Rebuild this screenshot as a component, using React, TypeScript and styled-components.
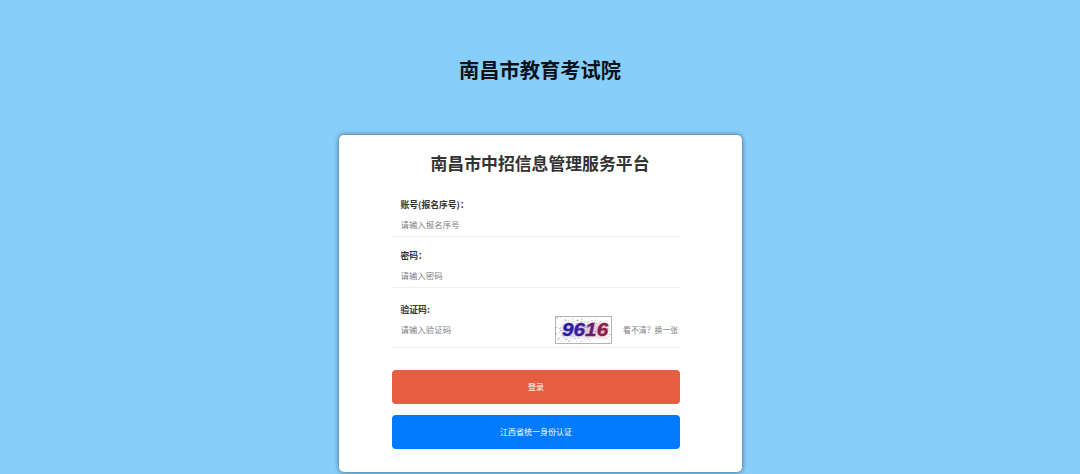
import React from 'react';
import styled, { createGlobalStyle } from 'styled-components';

const GlobalStyle = createGlobalStyle`
  * {
    box-sizing: border-box;
  }
  body {
    margin: 0;
    background: #87cefa;
    font-family: 'Noto Sans CJK SC', sans-serif;
    overflow: hidden;
  }
`;

const Page = styled.div`
  display: flex;
  flex-direction: column;
  align-items: center;
  height: 474px;
  padding-top: 55px;
`;

const PageTitle = styled.h1`
  margin: 0 0 50px;
  font-size: 20.25px;
  font-weight: 700;
  line-height: 30px;
  color: #0b1219;
`;

const Card = styled.div`
  flex: none;
  width: 403px;
  height: 337px;
  padding: 15px 61.5px 0 53.5px;
  background: #fff;
  border-radius: 5px;
  box-shadow: 0 0 5px rgba(0, 0, 0, 0.55);
`;

const CardTitle = styled.h2`
  margin: 0 0 23px;
  font-size: 16.85px;
  font-weight: 700;
  line-height: 26px;
  text-align: center;
  white-space: nowrap;
  color: #333;
  padding-left: 8px;
`;

interface FieldProps {
  height: number;
  gap: number;
}

const Field = styled.div<FieldProps>`
  display: flex;
  flex-direction: column;
  height: ${(p) => p.height}px;
  margin-bottom: ${(p) => p.gap}px;
  padding-left: 8.5px;
  border-bottom: 1px solid #f0f0f0;
`;

const Label = styled.label`
  flex: none;
  font-size: 8.8px;
  font-weight: 700;
  line-height: 12px;
  margin-bottom: 3px;
  color: #333;
`;

const InputRow = styled.div`
  display: flex;
  align-items: center;
  height: 22px;
`;

const Input = styled.input`
  flex: 1;
  min-width: 0;
  height: 20px;
  padding: 0 0 2px;
  border: 0;
  outline: 0;
  background: transparent;
  font: 400 8.45px/12px 'Noto Sans CJK SC', sans-serif;
  color: #333;
  &::placeholder {
    color: #808080;
    opacity: 1;
  }
`;

const CaptchaImage = styled.svg`
  flex: none;
  width: 57px;
  height: 28px;
  margin-right: 11px;
`;

const Refresh = styled.span`
  width: 57px;
  font-size: 7.9px;
  line-height: 12px;
  white-space: nowrap;
  color: #808080;
`;

const Button = styled.button<{ bgColor: string }>`
  display: block;
  width: 288px;
  height: 34px;
  margin: 0 0 11px;
  padding: 0;
  border: 0;
  border-radius: 4px;
  background: ${(p) => p.bgColor};
  color: #fff;
  font: 400 8px/12px 'Noto Sans CJK SC', sans-serif;
`;

const noiseColors = ['#777', '#a99', '#88a', '#999', '#b8a', '#9a9'];

// scattered specks behind the captcha digits
const specks = Array.from({ length: 130 }, (_, i) => ({
  x: 1 + ((i * 37 + (i * i) % 11) % 54),
  y: 1 + ((i * 17 + (i * i) % 7) % 25),
  w: i % 3 === 0 ? 1.6 : 0.8,
  fill: noiseColors[i % noiseColors.length],
}));

const Captcha = () => (
  <CaptchaImage viewBox="0 0 57 28">
    <defs>
      <linearGradient id="digits" gradientUnits="userSpaceOnUse" x1="7" y1="0" x2="46" y2="0">
        <stop offset="0" stopColor="#2419a8" />
        <stop offset="0.4" stopColor="#3a1b98" />
        <stop offset="0.7" stopColor="#7a1c60" />
        <stop offset="1" stopColor="#981c38" />
      </linearGradient>
      <filter id="glow" x="-20%" y="-20%" width="140%" height="140%">
        <feGaussianBlur stdDeviation="2" />
      </filter>
    </defs>
    <rect x="0.5" y="0.5" width="56" height="27" fill="#fff" stroke="#b4b4b4" />
    <rect x="7" y="8" width="45" height="13" fill="url(#digits)" opacity="0.22" filter="url(#glow)" />
    {specks.map((s, i) => (
      <rect key={i} x={s.x} y={s.y} width={s.w} height="0.8" fill={s.fill} opacity="0.6" />
    ))}
    <text
      x="6"
      y="20.5"
      transform="scale(1.15 1)"
      fontFamily="'Liberation Sans', sans-serif"
      fontSize="18"
      fontWeight="700"
      fontStyle="italic"
      letterSpacing="0.1"
      fill="url(#digits)"
      stroke="url(#digits)"
      strokeWidth="0.3"
    >
      9616
    </text>
  </CaptchaImage>
);

const App = () => {
  return (
    <>
      <GlobalStyle />
      <Page>
        <PageTitle>南昌市教育考试院</PageTitle>
        <Card>
          <CardTitle>南昌市中招信息管理服务平台</CardTitle>
          <Field height={38} gap={13}>
            <Label>账号(报名序号)：</Label>
            <InputRow>
              <Input placeholder="请输入报名序号" />
            </InputRow>
          </Field>
          <Field height={38} gap={16}>
            <Label>密码：</Label>
            <InputRow>
              <Input placeholder="请输入密码" />
            </InputRow>
          </Field>
          <Field height={44} gap={22}>
            <Label>验证码:</Label>
            <InputRow>
              <Input placeholder="请输入验证码" />
              <Captcha />
              <Refresh>看不清？换一张</Refresh>
            </InputRow>
          </Field>
          <Button bgColor="#e85d42">登录</Button>
          <Button bgColor="#007bff">江西省统一身份认证</Button>
        </Card>
      </Page>
    </>
  );
};

export default App;
